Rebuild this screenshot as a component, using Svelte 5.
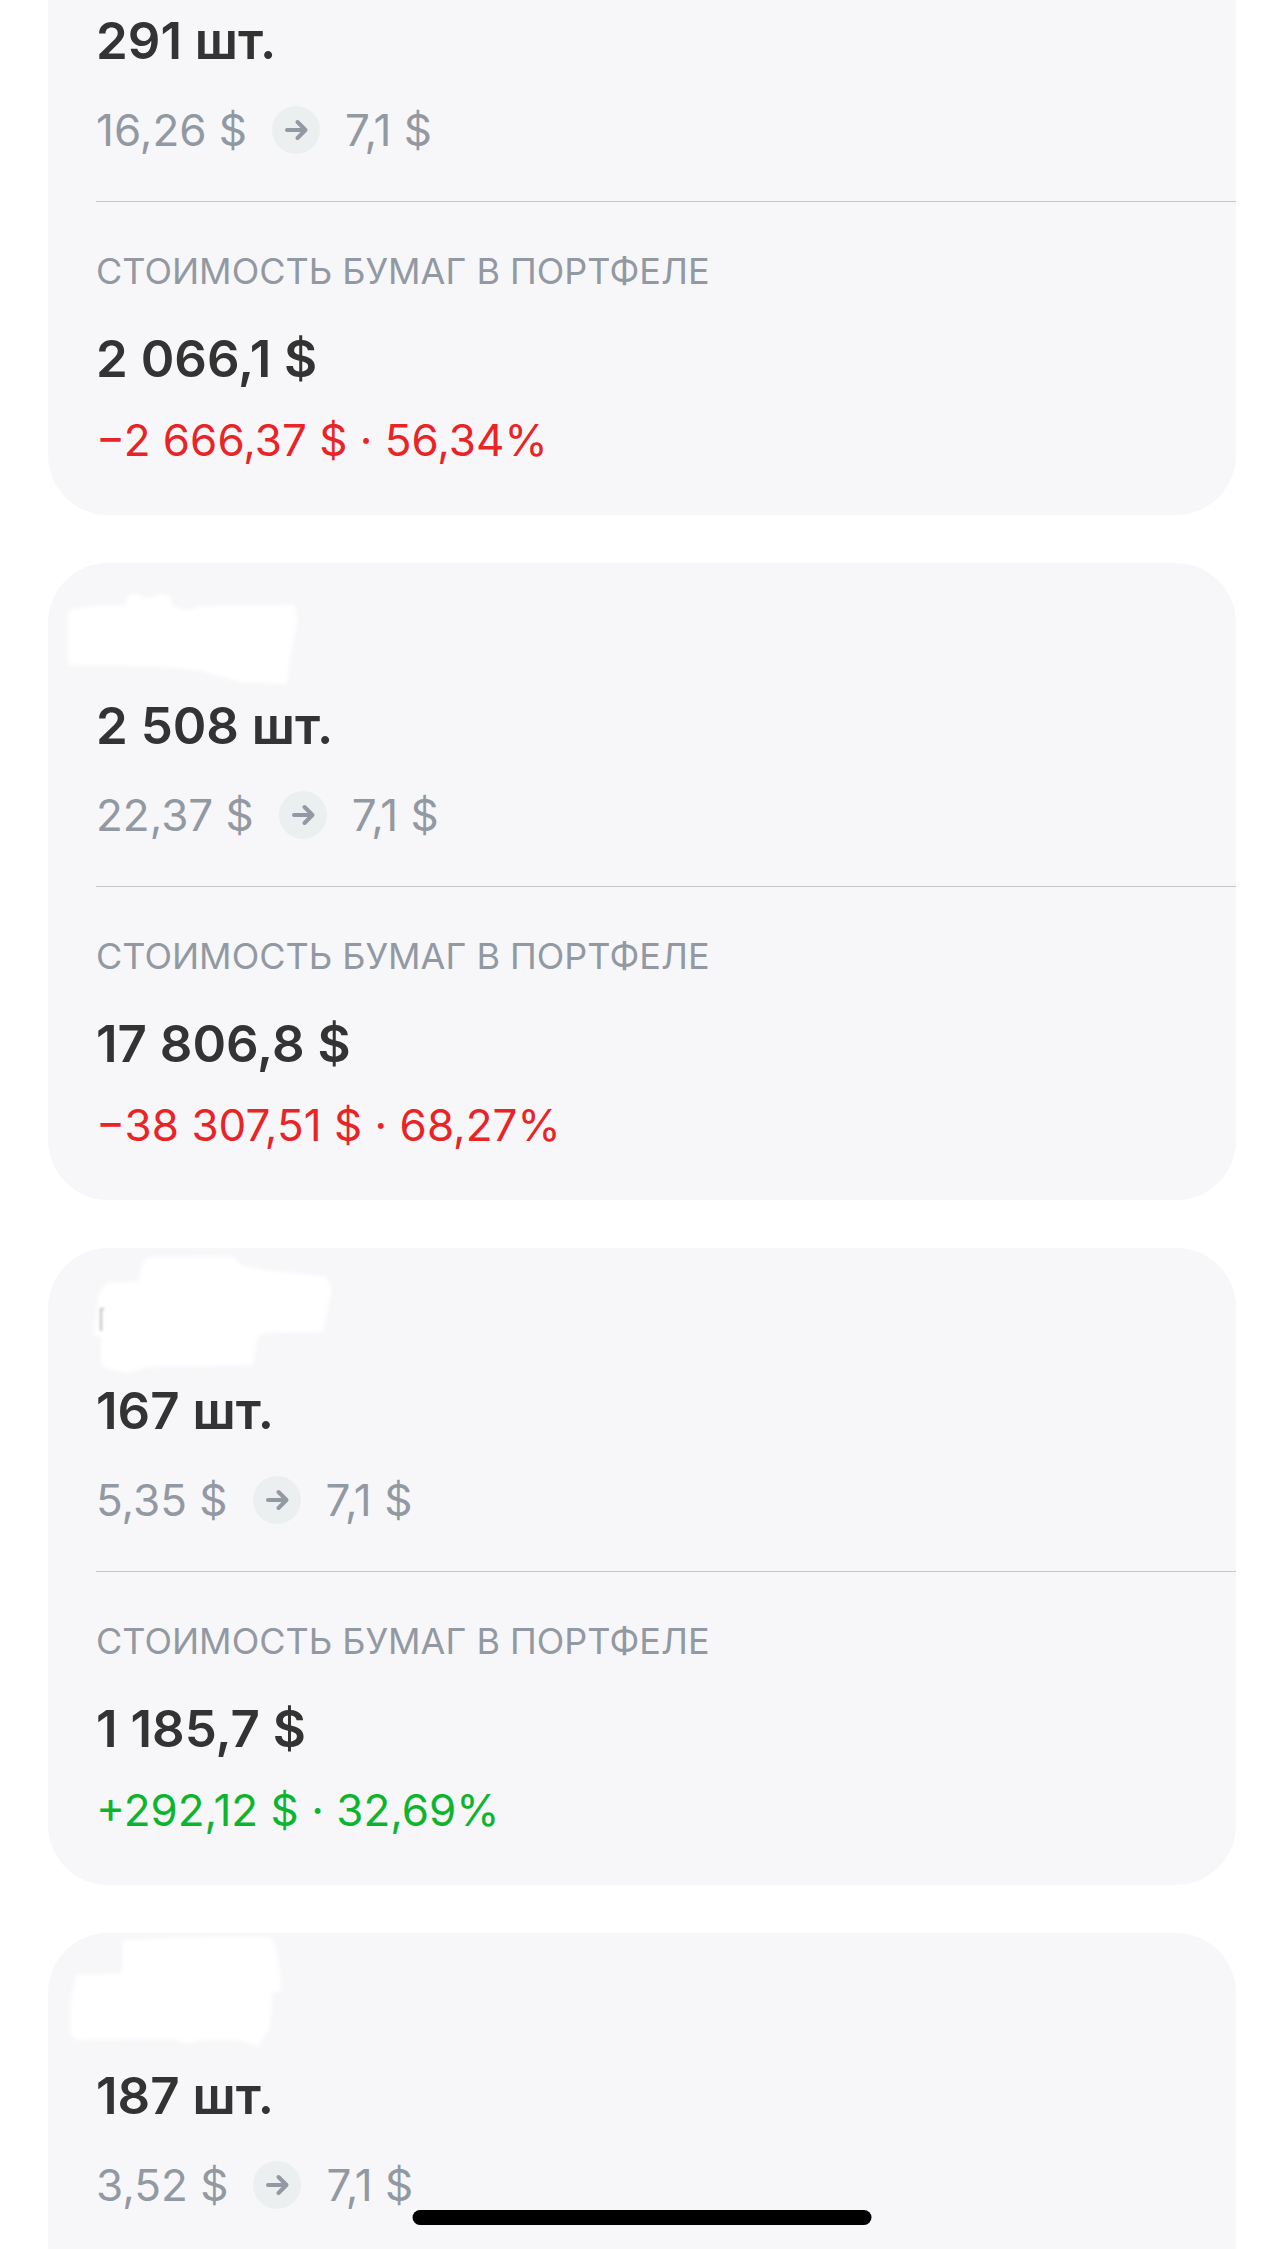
<script lang="ts">
    interface Lot {
        quantity: string;
        buyPrice: string;
        price: string;
        value?: string;
        change?: string;
        positive?: boolean;
        mask?: string;
        trace?: boolean;
    }

    const lots: Lot[] = [
        {
            quantity: '291 шт.',
            buyPrice: '16,26 $',
            price: '7,1 $',
            value: '2 066,1 $',
            change: '−2 666,37 $ · 56,34%',
        },
        {
            quantity: '2 508 шт.',
            buyPrice: '22,37 $',
            price: '7,1 $',
            value: '17 806,8 $',
            change: '−38 307,51 $ · 68,27%',
            mask: 'M20 47L45 43L79 42L79 33L89 30L100 36L115 30L123 34L124 43L139 47L152 43L247 42L249 57L242 97L239 121L192 119L149 107L115 104L20 102Z',
        },
        {
            quantity: '167 шт.',
            buyPrice: '5,35 $',
            price: '7,1 $',
            value: '1 185,7 $',
            change: '+292,12 $ · 32,69%',
            positive: true,
            mask: 'M49 62L51 45L59 35L91 34L93 19L99 9L185 8L194 18L219 22L279 29L283 42L275 84L214 85L209 92L205 117L99 119L79 125L54 119L53 89L45 87Z',
            trace: true,
        },
        {
            quantity: '187 шт.',
            buyPrice: '3,52 $',
            price: '7,1 $',
            mask: 'M23 67L28 42L74 40L75 7L159 4L224 4L229 20L233 50L233 58L224 60L222 94L210 114L192 107L152 107L139 111L125 106L29 107L22 100Z',
        },
    ];
</script>

<main class="lots">
    {#each lots as lot}
        <section class="card">
            {#if lot.mask}
                <!-- Date of the purchase, painted over -->
                <svg class="mask" viewBox="0 0 300 133" aria-hidden="true">
                    <path class="brush" d={lot.mask} />
                    {#if lot.trace}
                        <path class="trace" d="M53 60V83M53 61H56" />
                    {/if}
                </svg>
            {/if}
            <div class="top">
                <h2 class="amount">{lot.quantity}</h2>
                <div class="prices">
                    <span>{lot.buyPrice}</span>
                    <svg class="arrow" viewBox="0 0 48 48" aria-hidden="true">
                        <circle cx="24" cy="24" r="24" />
                        <path d="M15 24H33M25.5 16L33.5 24L25.5 32" />
                    </svg>
                    <span>{lot.price}</span>
                </div>
            </div>
            {#if lot.value}
                <div class="bottom">
                    <p class="label">СТОИМОСТЬ БУМАГ В ПОРТФЕЛЕ</p>
                    <p class="amount">{lot.value}</p>
                    <p class="change" class:positive={lot.positive}>{lot.change}</p>
                </div>
            {/if}
        </section>
    {/each}
</main>
<div class="home-indicator"></div>

<style>
    :global(body) {
        margin: 0;
        background: #fff;
    }

    .lots {
        display: flex;
        flex-direction: column;
        gap: 48px;
        box-sizing: border-box;
        min-height: 100vh;
        padding: 0 48px;
        font-family: Inter, "Liberation Sans", sans-serif;
    }

    .card {
        border-radius: 60px;
        background: #f7f7f9;
    }

    .card:first-child {
        padding-top: 11px;
        border-top-left-radius: 0;
        border-top-right-radius: 0;
    }

    .card:last-child {
        flex: 1;
        border-bottom-left-radius: 0;
        border-bottom-right-radius: 0;
    }

    .mask {
        display: block;
        width: 300px;
        height: 133px;
    }

    .brush {
        fill: #fff;
        filter: blur(2px);
    }

    .trace {
        fill: none;
        stroke: #d2d3d6;
        stroke-width: 3;
        filter: blur(1px);
    }

    .top {
        display: flex;
        flex-direction: column;
        gap: 35px;
        padding: 0 48px 47px;
    }

    .amount {
        margin: 0;
        color: #333;
        font-size: 51px;
        font-weight: 600;
        line-height: 60px;
    }

    .prices {
        display: flex;
        align-items: center;
        gap: 25px;
        color: #9299a2;
        font-size: 44px;
        line-height: 48px;
    }

    .arrow {
        width: 48px;
        height: 48px;
    }

    .arrow circle {
        fill: #eceff0;
    }

    .arrow path {
        fill: none;
        stroke: #9299a2;
        stroke-width: 4;
        stroke-linecap: round;
        stroke-linejoin: round;
    }

    .bottom {
        margin-left: 48px;
        padding: 45px 48px 47px 0;
        border-top: 1px solid #c4c6cc;
    }

    .label {
        margin: 0 0 34px;
        color: #9299a2;
        font-size: 36px;
        line-height: 48px;
    }

    .change {
        margin: 23px 0 0;
        color: #e92427;
        font-size: 44px;
        line-height: 56px;
    }

    .change.positive {
        color: #0db52f;
    }

    .home-indicator {
        position: fixed;
        bottom: 24px;
        left: 50%;
        width: 459px;
        height: 15px;
        border-radius: 8px;
        background: #000;
        transform: translateX(-50%);
    }
</style>
